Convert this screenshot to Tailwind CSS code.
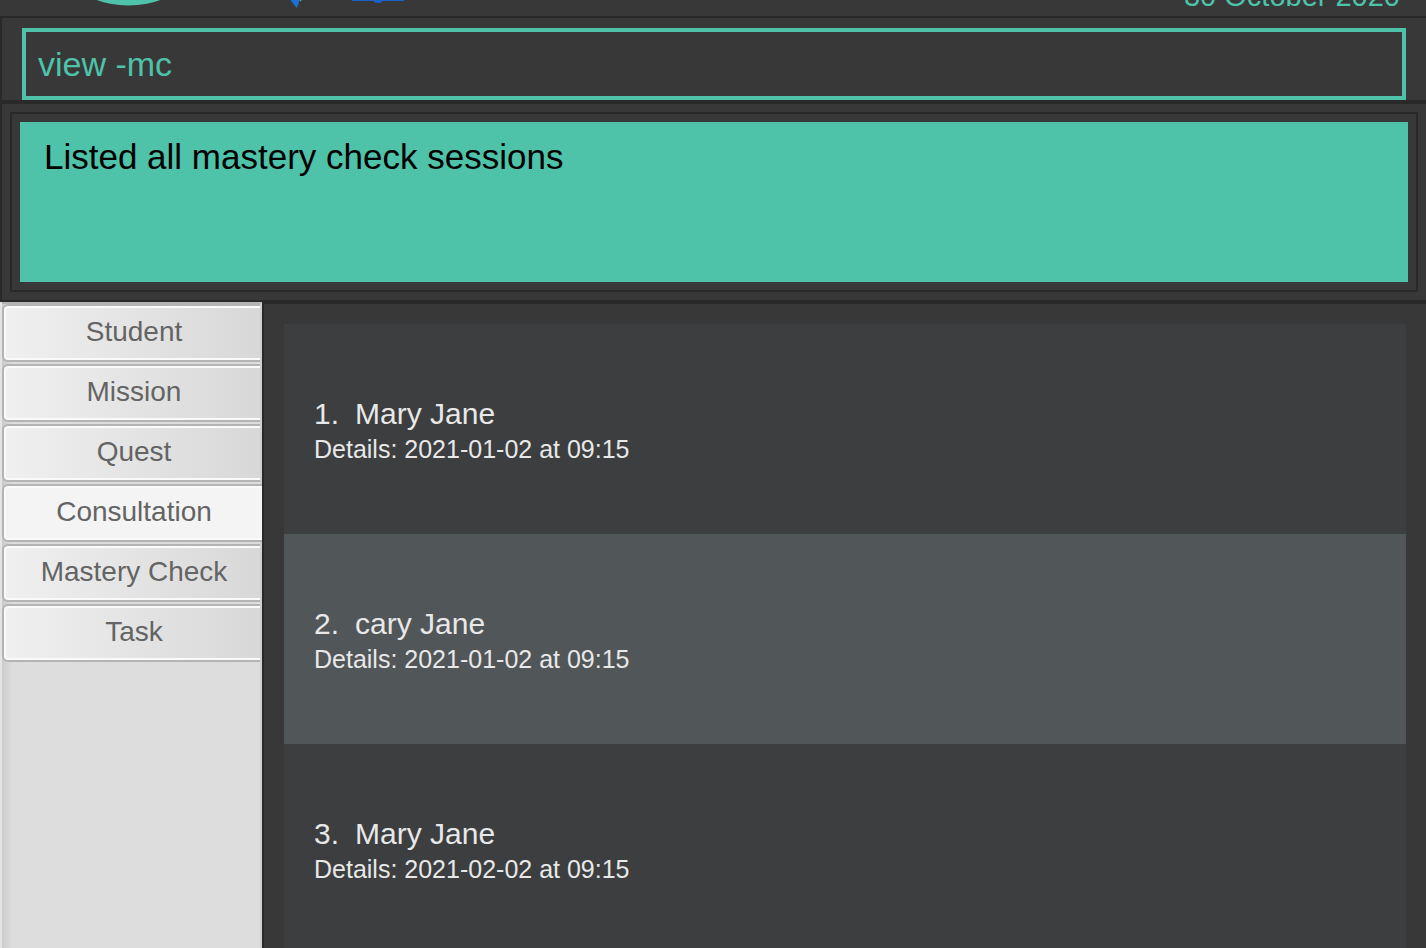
<!DOCTYPE html>
<html lang="en">
<head>
<meta charset="utf-8">
<title>Session list</title>
<script src="https://cdn.jsdelivr.net/npm/@tailwindcss/browser@4"></script>
</head>
<body class="h-screen overflow-hidden bg-[#383838] font-['Liberation_Sans',Arial,sans-serif] flex flex-col">
  <header class="h-4 shrink-0 overflow-hidden flex items-end justify-between pl-20 pr-[26px]">
    <svg class="h-4 w-[340px]" viewBox="0 0 340 16" aria-hidden="true">
      <circle cx="48.500" cy="-88.400" r="94" fill="#4ec3aa"/>
      <path d="M210.500 0h9l-1 4-2 4z" fill="#1b6fd6"/>
      <path d="M219.500 0h2l-1 1.500z" fill="#4ec3aa"/>
      <path d="M272 0h52v1h-52z" fill="#1c62cc"/>
      <path d="M294 0q1 2 4 2t4-2" fill="none" stroke="#1c62cc" stroke-width="2"/>
    </svg>
    <p class="text-[29px] leading-10 text-[#4ec3aa]">30 October 2020</p>
  </header>
  <main class="flex-1 min-h-0 flex flex-col">
    <form class="shrink-0 border-t-2 border-l-2 border-b-4 border-[#292929] pt-2.5 px-5">
      <input type="text" value="view -mc" aria-label="Command" class="block w-full h-[72px] border-4 border-[#4ec3aa] bg-transparent px-3 text-[34px] leading-10 text-[#4ec3aa] outline-none">
    </form>
    <section class="shrink-0 border-l-2 border-b-2 border-[#292929] p-2">
      <div class="border-2 border-[#292929] p-2">
        <output class="block h-40 bg-[#4ec3aa] px-6 pt-3 text-[35px] leading-[46px] text-black">Listed all mastery check sessions</output>
      </div>
    </section>
    <div class="flex-1 min-h-0 flex">
      <nav class="w-[264px] shrink-0 border-l-2 border-l-[#e4e4e4] border-r-2 border-r-[#292929] bg-linear-to-r from-[#cccccc] from-0% via-[#dddddd] via-4% to-[#dddddd]">
        <div class="h-full flex flex-col gap-0.5 border-t-2 border-t-[#b4b4b4] border-r-2 border-r-[#cfcfcf] text-[28px] text-[#646464]">
          <button type="button" class="h-[58px] pl-1 pb-0.5 rounded-l-md border-2 border-r-0 border-[#b4b4b4] bg-linear-to-r from-[#f0f0f0] to-[#d8d8d8] shadow-[inset_2px_2px_0_#fafafa,inset_0_-2px_0_#fafafa]">Student</button>
          <button type="button" class="h-[58px] pl-1 pb-0.5 rounded-l-md border-2 border-r-0 border-[#b4b4b4] bg-linear-to-r from-[#f0f0f0] to-[#d8d8d8] shadow-[inset_2px_2px_0_#fafafa,inset_0_-2px_0_#fafafa]">Mission</button>
          <button type="button" class="h-[58px] pl-1 pb-0.5 rounded-l-md border-2 border-r-0 border-[#b4b4b4] bg-linear-to-r from-[#f0f0f0] to-[#d8d8d8] shadow-[inset_2px_2px_0_#fafafa,inset_0_-2px_0_#fafafa]">Quest</button>
          <button type="button" aria-current="page" class="h-[58px] -mr-0.5 pl-0.5 pb-0.5 rounded-l-md border-2 border-r-0 border-[#b4b4b4] bg-[#f4f4f4] shadow-[inset_2px_2px_0_#fafafa,inset_0_-2px_0_#fafafa]">Consultation</button>
          <button type="button" class="h-[58px] pl-1 pb-0.5 rounded-l-md border-2 border-r-0 border-[#b4b4b4] bg-linear-to-r from-[#f0f0f0] to-[#d8d8d8] shadow-[inset_2px_2px_0_#fafafa,inset_0_-2px_0_#fafafa]">Mastery Check</button>
          <button type="button" class="h-[58px] pl-1 pb-0.5 rounded-l-md border-2 border-r-0 border-[#b4b4b4] bg-linear-to-r from-[#f0f0f0] to-[#d8d8d8] shadow-[inset_2px_2px_0_#fafafa,inset_0_-2px_0_#fafafa]">Task</button>
        </div>
      </nav>
      <section class="flex-1 min-w-0 overflow-hidden border-t-2 border-[#292929] pt-5 px-5">
        <ol class="text-[#e8e8e8]">
          <li class="h-[210px] bg-[#3c3e3f] pt-[72px] px-[30px]">
            <h2 class="flex gap-4 text-[30px] leading-9"><span>1.</span><span>Mary Jane</span></h2>
            <p class="text-[25px] leading-[34px]">Details: 2021-01-02 at 09:15</p>
          </li>
          <li class="h-[210px] bg-[#515658] pt-[72px] px-[30px]">
            <h2 class="flex gap-4 text-[30px] leading-9"><span>2.</span><span>cary Jane</span></h2>
            <p class="text-[25px] leading-[34px]">Details: 2021-01-02 at 09:15</p>
          </li>
          <li class="h-[210px] bg-[#3c3e3f] pt-[72px] px-[30px]">
            <h2 class="flex gap-4 text-[30px] leading-9"><span>3.</span><span>Mary Jane</span></h2>
            <p class="text-[25px] leading-[34px]">Details: 2021-02-02 at 09:15</p>
          </li>
        </ol>
      </section>
    </div>
  </main>
</body>
</html>
